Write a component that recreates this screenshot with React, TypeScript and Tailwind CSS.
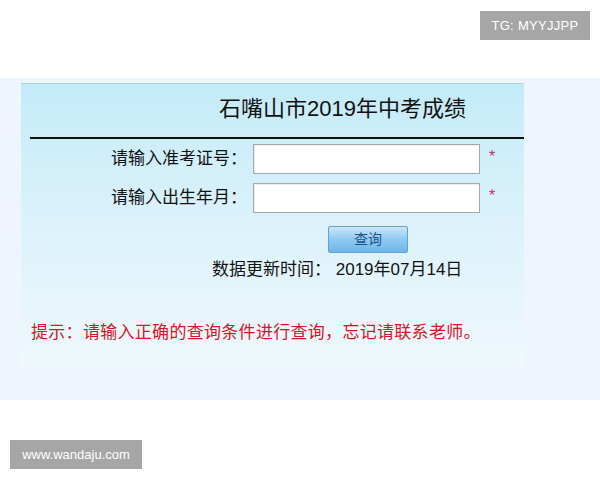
import { FC } from "react";

const font = { fontFamily: '"Liberation Sans", "Noto Sans CJK SC", sans-serif' };

interface RowProps {
  label: string;
}

const InputRow: FC<RowProps> = ({ label }) => (
  <div className="flex h-[30px] items-center">
    <div className="w-[226px] text-right text-[17px] leading-[20px] text-[#111]">{label}</div>
    <input
      className="ml-[6px] h-[30px] w-[227px] border border-[#a3a8ad] bg-white shadow-[inset_1px_1px_1px_rgba(0,0,0,0.08)] outline-none"
      type="text"
    />
    <span className="ml-[9px] self-start pt-[5px] text-[16px] leading-[16px] text-[#c8326a]">*</span>
  </div>
);

const App: FC = () => {
  return (
    <div className="flex h-[480px] w-[600px] flex-col bg-white" style={font}>
      {/* top */}
      <div className="flex h-[78px] justify-end pr-[10px] pt-[11px]">
        <div className="flex h-[29px] w-[110px] items-center justify-center bg-[#a6a6a6] text-[13px] tracking-[0.3px] text-white">
          TG: MYYJJPP
        </div>
      </div>

      {/* band */}
      <div className="h-[322px] bg-[#eef5fc] pl-[21px] pt-[5px]">
        <div className="w-[503px] border-t border-[#a8d6e4] bg-gradient-to-b from-[#c4ebf8] via-[#dcf2fb] to-[#eff8fd] pb-[24px]">
          <div className="h-[53px] pl-[198px] pt-[13px]">
            <div className="text-[22px] leading-[24px] text-[#111]">石嘴山市2019年中考成绩</div>
          </div>
          <div className="ml-[9px] h-[2px] bg-[#111]" />

          <div className="mt-[5px] flex flex-col gap-[9px]">
            <InputRow label="请输入准考证号：" />
            <InputRow label="请输入出生年月：" />
          </div>

          <div className="mt-[13px] pl-[307px]">
            <button className="flex h-[27px] w-[80px] items-center justify-center rounded-[2px] border border-[#6d9fcc] bg-gradient-to-b from-[#c7e6fb] via-[#8ec9f2] to-[#6db7ec] text-[14px] text-[#1f4f8c]">
              查询
            </button>
          </div>

          <div className="mt-[7px] pl-[191px] text-[17px] leading-[20px] text-[#111]">
            数据更新时间： 2019年07月14日
          </div>

          <div className="mt-[43px] pl-[10px] text-[17px] leading-[20px] tracking-[0.3px] text-[#d81424]">
            提示：请输入正确的查询条件进行查询，忘记请联系老师。
          </div>
        </div>
      </div>

      {/* bottom */}
      <div className="pl-[10px] pt-[40px]">
        <div className="flex h-[29px] w-[132px] items-center justify-center bg-[#a6a6a6] text-[13px] text-white">
          www.wandaju.com
        </div>
      </div>
    </div>
  );
};

export default App;
